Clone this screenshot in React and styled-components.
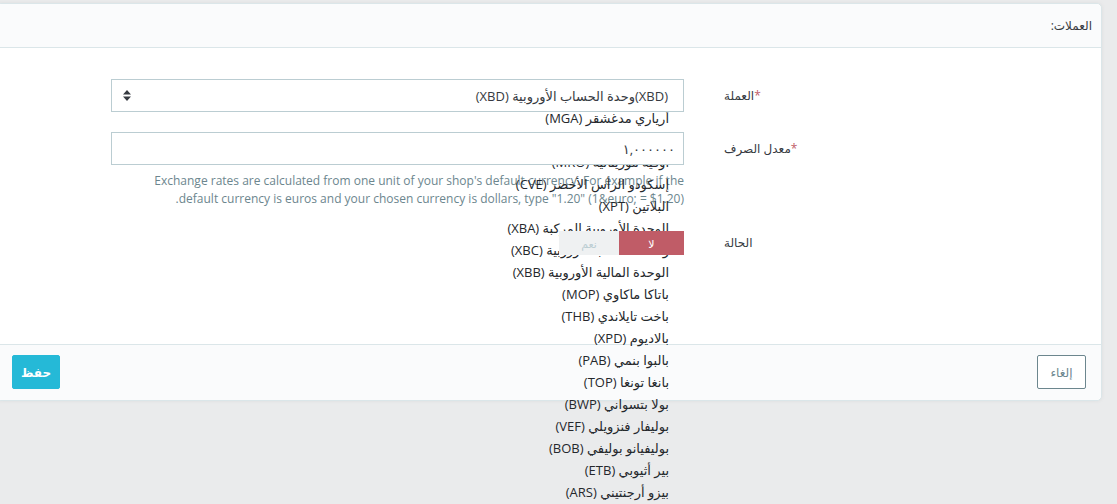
import React from 'react';
import styled, { createGlobalStyle } from 'styled-components';

const GlobalStyle = createGlobalStyle`
  html, body {
    margin: 0;
    padding: 0;
    overflow: hidden;
    background: #eaebec;
    font-family: "Open Sans", "DejaVu Sans", sans-serif;
    color: #363a41;
  }
`;

const Page = styled.div`
  direction: rtl;
  height: 504px;
  padding-top: 3px;
  box-sizing: border-box;
`;

const Panel = styled.div`
  margin: 0 15px 0 0;
  margin-left: -4px;
  background: #fff;
  border: 1px solid #dbe6e9;
  border-radius: 5px;
  box-shadow: 0 0 4px rgba(0, 0, 0, 0.06);
`;

const Header = styled.div`
  height: 43px;
  display: flex;
  align-items: center;
  padding: 0 9px;
  background: #fafbfc;
  border-bottom: 1px solid #dbe6e9;
  border-radius: 5px 5px 0 0;
  font-size: 12px;
`;

const Body = styled.div`
  padding: 31px 0 89px;
`;

const FormRow = styled.div`
  display: grid;
  grid-template-columns: 377px 573px;
  column-gap: 40px;
  align-items: start;
  margin-bottom: ${(p) => p.$gap ?? 20}px;
`;

const Label = styled.label`
  text-align: left;
  font-size: 12px;
  line-height: ${(p) => p.$h || 33}px;
`;

const Req = styled.span`
  color: #c05c67;
`;

const Cell = styled.div`
  position: relative;
`;

const SelectBox = styled.div`
  position: relative;
  z-index: 2;
  height: 33px;
  box-sizing: border-box;
  border: 1px solid #bbcdd2;
  background: #fff;
  display: flex;
  align-items: center;
  justify-content: space-between;
  padding: 0 15px 0 11px;
  font-size: 13px;
`;

const Arrows = styled.svg`
  flex: none;
`;

const DropList = styled.ul`
  position: absolute;
  z-index: 1;
  top: 28px;
  right: 0;
  margin: 0;
  padding: 0 15px 0 0;
  list-style: none;
  white-space: nowrap;
  font-size: 13px;
  line-height: 22px;
  color: #25282c;
`;

const TextInput = styled.div`
  position: relative;
  z-index: 2;
  height: 33px;
  box-sizing: border-box;
  border: 1px solid #bbcdd2;
  background: #fff;
  display: flex;
  align-items: center;
  padding: 0 8px;
  font-size: 13px;
`;

const Help = styled.p`
  margin: 7px 0 0;
  padding-bottom: 3px;
  font-size: 12px;
  line-height: 18px;
  color: #6c868e;
  text-align: right;
`;

const Switch = styled.div`
  position: relative;
  z-index: 2;
  width: 125px;
  height: 24px;
  display: flex;
`;

const SwitchHalf = styled.span`
  flex: ${(p) => (p.$on ? '0 0 65px' : '1')};
  display: flex;
  align-items: center;
  justify-content: center;
  font-size: 11px;
  background: ${(p) => (p.$on ? '#c05c67' : '#eff1f2')};
  color: ${(p) => (p.$on ? '#fff' : '#bbcdd2')};
`;

const Footer = styled.div`
  display: flex;
  justify-content: space-between;
  align-items: center;
  padding: 10px 15px 11px;
  background: #fafbfc;
  border-top: 1px solid #dbe6e9;
  border-radius: 0 0 5px 5px;
`;

const Button = styled.button`
  height: 34px;
  padding: 0;
  font-family: inherit;
  font-size: 12px;
  font-weight: ${(p) => (p.$primary ? 700 : 400)};
  border-radius: 2px;
  border: 1px solid ${(p) => (p.$primary ? '#25b9d7' : '#6c868e')};
  background: ${(p) => (p.$primary ? '#25b9d7' : '#fff')};
  color: ${(p) => (p.$primary ? '#fff' : '#6c868e')};
  width: ${(p) => (p.$primary ? 48 : 49)}px;
`;

const currencies = [
  'أرياري مدغشقر (MGA)',
  'أفغاني أفغانستاني (AFN)',
  'أوقية موريتانية (MRO)',
  'إسكودو الرأس الأخضر (CVE)',
  'البلاتين (XPT)',
  'الوحدة الأوروبية المركبة (XBA)',
  'وحدة الحساب الأوروبية (XBC)',
  'الوحدة المالية الأوروبية (XBB)',
  'باتاكا ماكاوي (MOP)',
  'باخت تايلاندي (THB)',
  'بالاديوم (XPD)',
  'بالبوا بنمي (PAB)',
  'بانغا تونغا (TOP)',
  'بولا بتسواني (BWP)',
  'بوليفار فنزويلي (VEF)',
  'بوليفيانو بوليفي (BOB)',
  'بير أثيوبي (ETB)',
  'بيزو أرجنتيني (ARS)',
  'بيزو تشيلي (CLP)',
];

const App = () => (
  <Page>
    <GlobalStyle />
    <Panel>
      <Header>العملات:</Header>
      <Body>
        <FormRow>
          <Label><Req>*</Req>العملة</Label>
          <Cell>
            <SelectBox>
              <span>(XBD)وحدة الحساب الأوروبية (XBD)</span>
              <Arrows width="8" height="11" viewBox="0 0 8 11">
                <path d="M4 0 L8 4.5 L0 4.5 Z M0 6.5 L8 6.5 L4 11 Z" fill="#363a41" />
              </Arrows>
            </SelectBox>
            <DropList>
              {currencies.map((c) => (
                <li key={c}>{c}</li>
              ))}
            </DropList>
          </Cell>
        </FormRow>
        <FormRow>
          <Label><Req>*</Req>معدل الصرف</Label>
          <Cell>
            <TextInput>١,٠٠٠٠٠٠</TextInput>
            <Help>
              Exchange rates are calculated from one unit of your shop's default currency. For example if the
              <br />
              default currency is euros and your chosen currency is dollars, type "1.20" (1&amp;euro; = $1.20).
            </Help>
          </Cell>
        </FormRow>
        <FormRow $gap={0}>
          <Label $h={24}>الحالة</Label>
          <Cell>
            <Switch>
              <SwitchHalf $on>لا</SwitchHalf>
              <SwitchHalf>نعم</SwitchHalf>
            </Switch>
          </Cell>
        </FormRow>
      </Body>
      <Footer>
        <Button>إلغاء</Button>
        <Button $primary>حفظ</Button>
      </Footer>
    </Panel>
  </Page>
);

export default App;
